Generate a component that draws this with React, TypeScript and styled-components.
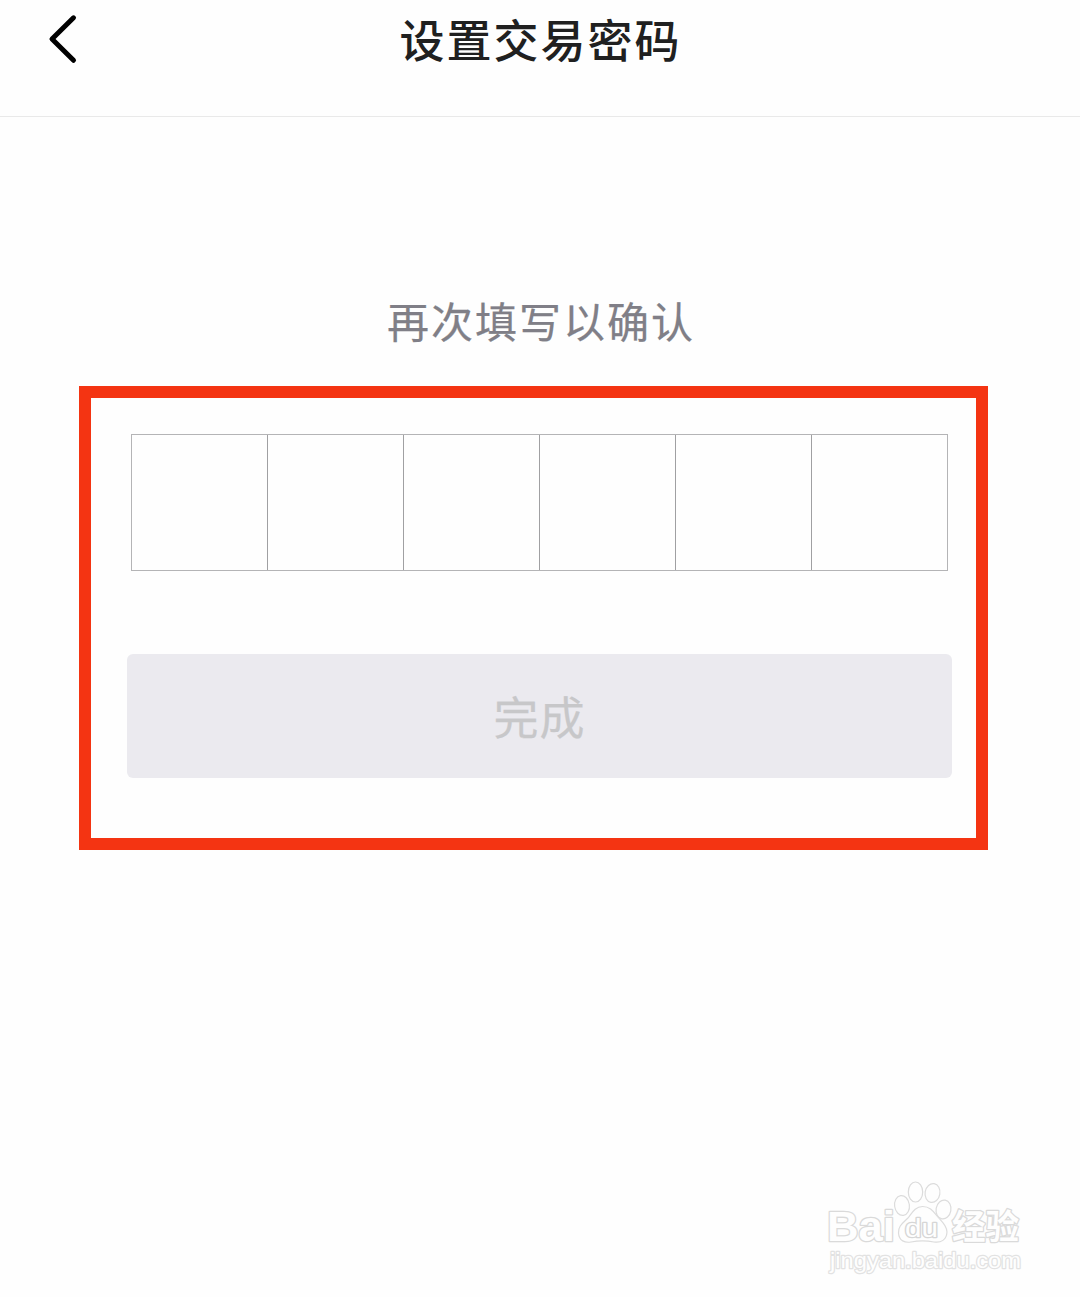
import React from 'react';
import styled, { createGlobalStyle } from 'styled-components';

const GlobalStyle = createGlobalStyle`
  * { box-sizing: border-box; }
  body {
    margin: 0;
    background: #fefefe;
    font-family: "Noto Sans CJK SC", "Liberation Sans", sans-serif;
  }
`;

const Page = styled.div`
  position: relative;
  display: flex;
  flex-direction: column;
  width: 1080px;
  height: 1297px;
  overflow: hidden;
`;

const Header = styled.header`
  display: grid;
  grid-template-columns: 140px 1fr 140px;
  height: 117px;
  border-bottom: 1px solid #e9e9e9;
`;

const BackButton = styled.button`
  display: flex;
  align-items: flex-start;
  padding: 10px 0 0 40px;
  border: 0;
  background: none;
`;

const Title = styled.h1`
  margin: 0;
  padding-left: 1px;
  text-align: center;
  font-size: 45px;
  font-weight: 500;
  line-height: 78px;
  letter-spacing: 2px;
  color: #202020;
`;

const Main = styled.main`
  display: flex;
  flex-direction: column;
  padding-top: 173px;
`;

const Prompt = styled.p`
  margin: 0;
  height: 96px;
  padding-left: 2px;
  text-align: center;
  font-size: 42px;
  line-height: 60px;
  letter-spacing: 2px;
  color: #807f87;
  -webkit-text-stroke: 0.25px #807f87;
`;

const Highlight = styled.section`
  display: flex;
  flex-direction: column;
  width: 909px;
  height: 464px;
  margin-left: 79px;
  padding: 36px 24px 0 36px;
  border: 12px solid #f43412;
`;

const CodeRow = styled.div`
  display: flex;
  width: 817px;
  height: 137px;
  margin-left: 4px;
  border: 1px solid #b4b4b6;
`;

const CodeCell = styled.div`
  width: 136px;
  & + & { border-left: 1px solid #a0a0a2; }
  &:first-child { width: 135px; }
`;

const SubmitButton = styled.button`
  display: flex;
  align-items: center;
  justify-content: center;
  width: 825px;
  height: 124px;
  margin-top: 83px;
  padding: 0 0 2px 0;
  border: 0;
  border-radius: 6px;
  background: #ebeaef;
  color: #c7c7c9;
  font-family: inherit;
  font-size: 45px;
  letter-spacing: 1px;
  -webkit-text-stroke: 0.25px #c7c7c9;
`;

const Watermark = styled.svg`
  position: absolute;
  left: 820px;
  top: 1175px;
  fill: #fefefe;
  stroke: #dcdcdc;
  stroke-width: 1.2;
`;

const Brand = styled.text`
  font-family: "Liberation Sans", sans-serif;
  font-weight: 700;
  font-size: 43px;
  stroke: #dadada;
  stroke-width: 2.6;
  stroke-linejoin: round;
  paint-order: stroke;
`;

const Du = styled(Brand)`
  font-weight: 400;
  font-size: 26px;
  stroke: #d6d6d6;
  stroke-width: 2.6;
`;

const BrandCn = styled(Brand)`
  font-family: "Noto Sans CJK SC", sans-serif;
  font-size: 34px;
  stroke-width: 2.6;
`;

const Url = styled(Brand)`
  font-weight: 400;
  font-size: 22.5px;
  stroke: #e2e2e2;
  stroke-width: 2.4;
`;

export default function App() {
  return (
    <>
      <GlobalStyle />
      <Page>
        <Header>
          <BackButton aria-label="返回">
            <svg width="44" height="60" viewBox="40 10 44 60" fill="none" stroke="#000" strokeWidth="5" strokeLinecap="round" strokeLinejoin="round">
              <path d="M73.5 17.8 L52 39 L73.5 60.3" />
            </svg>
          </BackButton>
          <Title>设置交易密码</Title>
        </Header>
        <Main>
          <Prompt>再次填写以确认</Prompt>
          <Highlight>
            <CodeRow>
              {Array.from({ length: 6 }, (_, i) => <CodeCell key={i} />)}
            </CodeRow>
            <SubmitButton disabled>完成</SubmitButton>
          </Highlight>
        </Main>
        <Watermark width="220" height="115" viewBox="820 1175 220 115">
          <Brand x="827" y="1241" textLength="68" lengthAdjust="spacingAndGlyphs">Bai</Brand>
          <ellipse cx="902" cy="1205.5" rx="7.4" ry="10" transform="rotate(-8 902 1205.5)" />
          <ellipse cx="915.5" cy="1192" rx="7.2" ry="10" />
          <ellipse cx="932.5" cy="1193" rx="7.4" ry="9.5" transform="rotate(10 932.5 1193)" />
          <ellipse cx="943.5" cy="1209.5" rx="7.4" ry="9.5" transform="rotate(10 943.5 1209.5)" />
          <path d="M922.5 1206.5 C915 1206.5 912 1213 908 1218 C903 1223 898 1226 898.5 1233 C899 1241 905 1243 911 1242 C919 1240.5 926 1240.5 934 1242 C941 1243 946.5 1240 947 1232 C947 1225 941 1221 937 1216 C933 1211 930 1206.5 922.5 1206.5 Z" />
          <Du x="905" y="1237" textLength="33" lengthAdjust="spacingAndGlyphs">du</Du>
          <BrandCn x="952" y="1238.5" textLength="67" lengthAdjust="spacingAndGlyphs">经验</BrandCn>
          <Url x="830" y="1268" textLength="191" lengthAdjust="spacingAndGlyphs">jingyan.baidu.com</Url>
        </Watermark>
      </Page>
    </>
  );
}
